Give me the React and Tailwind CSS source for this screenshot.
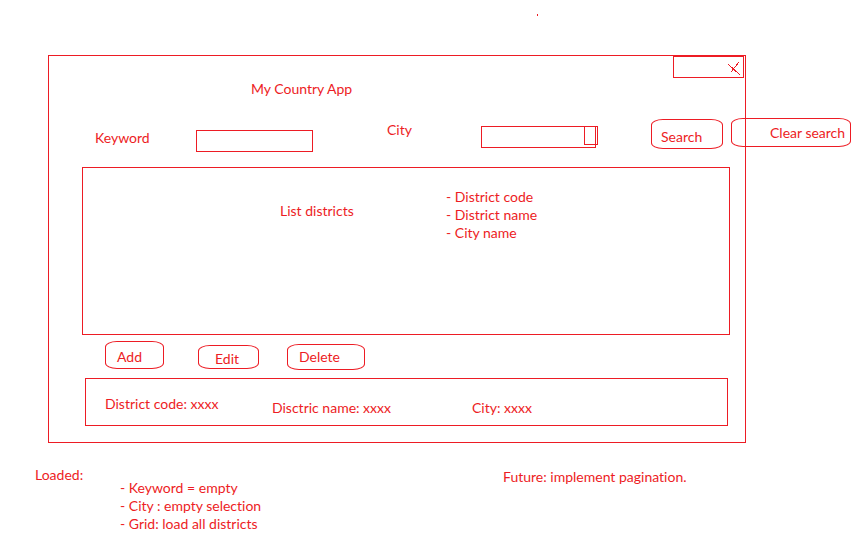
const pill =
  "shrink-0 border border-[#ed1c24] rounded-[12px/6px] text-left cursor-pointer";

function Window({ children }) {
  return (
    <section className="mt-[39px] mr-[118px] ml-12 border border-[#ed1c24] pb-4">
      {children}
    </section>
  );
}

function TitleBar() {
  return (
    <header>
      <div className="mr-px ml-auto flex h-[22px] w-[71px] justify-end border border-[#ed1c24]">
        <button type="button" aria-label="Close" className="h-5 w-4 cursor-pointer">
          <svg
            width="16"
            height="20"
            viewBox="0 0 16 20"
            fill="none"
            stroke="#ed1c24"
            shapeRendering="crispEdges"
          >
            <path d="M1 7L13 18M12 5L4 15" />
          </svg>
        </button>
      </div>
      <h1 className="mt-0.5 ml-[202px]">My Country App</h1>
    </header>
  );
}

function SearchForm() {
  return (
    <form
      className="mt-5 flex items-start pl-[46px]"
      onSubmit={(event) => event.preventDefault()}
    >
      <label htmlFor="keyword" className="mt-[11px] w-[101px] shrink-0">
        Keyword
      </label>
      <input
        id="keyword"
        type="text"
        className="mt-3 h-[22px] w-[117px] border border-[#ed1c24] px-1 outline-none"
      />
      <label htmlFor="city" className="mt-[3px] ml-[74px] w-[94px] shrink-0">
        City
      </label>
      <div className="relative mt-2 shrink-0">
        <select
          id="city"
          className="block h-[22px] w-[115px] appearance-none border border-[#ed1c24] px-1 outline-none"
        >
          <option value=""></option>
        </select>
        <span className="pointer-events-none absolute top-0 -right-0.5 h-[19px] w-3.5 border border-[#ed1c24]" />
      </div>
      <div className="-mr-[106px] ml-auto flex items-start gap-2">
        <button type="submit" className={`${pill} mt-px h-[30px] w-[72px] pt-1.5 pl-[9px]`}>
          Search
        </button>
        <button type="reset" className={`${pill} h-[29px] w-[120px] pl-[38px]`}>
          Clear search
        </button>
      </div>
    </form>
  );
}

function DistrictList() {
  return (
    <section className="mt-[15px] mr-[15px] ml-[33px] flex min-h-[168px] border border-[#ed1c24] pt-5 pl-[197px]">
      <h2 className="mt-3.5 w-[166px] shrink-0">List districts</h2>
      <ul>
        <li>- District code</li>
        <li>- District name</li>
        <li>- City name</li>
      </ul>
    </section>
  );
}

function Actions() {
  return (
    <div className="mt-1.5 flex items-start pl-14">
      <button type="button" className={`${pill} h-7 w-[59px] pt-1 pl-[11px]`}>
        Add
      </button>
      <button type="button" className={`${pill} mt-1 ml-[34px] h-6 w-[61px] pt-1 pl-4`}>
        Edit
      </button>
      <button type="button" className={`${pill} mt-[3px] ml-7 h-[26px] w-[78px] pl-[11px]`}>
        Delete
      </button>
    </div>
  );
}

function Details() {
  return (
    <section className="mt-2 mr-[17px] ml-9 flex min-h-12 items-start border border-[#ed1c24] pt-4 pl-[19px]">
      <p className="w-[167px] shrink-0">District code: xxxx</p>
      <p className="mt-1 w-[200px] shrink-0">Disctric name: xxxx</p>
      <p className="mt-1">City: xxxx</p>
    </section>
  );
}

function Notes() {
  return (
    <footer className="mt-[23px] grid grid-cols-[85px_383px_1fr] items-start pl-[35px]">
      <p>Loaded:</p>
      <ul className="mt-[13px]">
        <li>- Keyword = empty</li>
        <li>- City : empty selection</li>
        <li>- Grid: load all districts</li>
      </ul>
      <p className="mt-0.5">Future: implement pagination.</p>
    </footer>
  );
}

export default function App() {
  return (
    <div className="min-h-screen overflow-x-hidden bg-white font-['Lato',sans-serif] text-[14px] leading-[18px] text-[#ed1c24] [font-variant-ligatures:none]">
      <div className="pt-3.5 pl-[537px]">
        <div className="h-0.5 w-px bg-[#ed1c24]" />
      </div>
      <Window>
        <TitleBar />
        <SearchForm />
        <DistrictList />
        <Actions />
        <Details />
      </Window>
      <Notes />
    </div>
  );
}
